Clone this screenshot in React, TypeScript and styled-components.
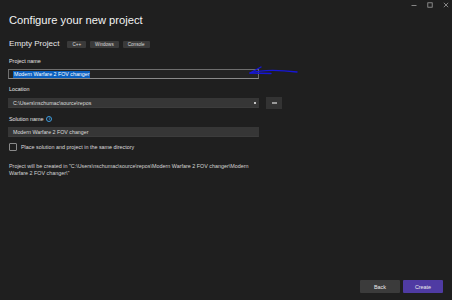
import React from "react";
import styled, { createGlobalStyle } from "styled-components";

const GlobalStyle = createGlobalStyle`
  html, body {
    margin: 0;
    padding: 0;
    background: #1f1f1f;
  }
  body {
    font-family: "Liberation Sans", Arial, sans-serif;
    color: #e6e6e6;
  }
`;

const Window = styled.div`
  position: relative;
  width: 452px;
  height: 300px;
  background: #1f1f1f;
  display: flex;
  flex-direction: column;
  box-sizing: border-box;
  padding: 12px 9px 7px 8px;
  overflow: hidden;
`;

const Controls = styled.div`
  position: absolute;
  top: 0;
  right: -2px;
  display: flex;
`;

const ControlButton = styled.div`
  width: 16px;
  height: 10px;
  display: flex;
  align-items: center;
  justify-content: center;
`;

const Title = styled.h1`
  margin: 0 0 0 1px;
  font-size: 11.2px;
  font-weight: 400;
  line-height: 16px;
  color: #f2f2f2;
`;

const TemplateRow = styled.div`
  display: flex;
  align-items: center;
  height: 10px;
  margin: 11px 0 0 1px;
  gap: 4px;
`;

const TemplateName = styled.span`
  font-size: 8.1px;
  line-height: 10px;
  color: #e8e8e8;
  margin-right: 4px;
`;

const Tag = styled.span`
  font-size: 4.6px;
  line-height: 7px;
  padding: 0 5px;
  background: #3a3a3a;
  color: #dadada;
  border-radius: 1px;
`;

const Field = styled.div<{ $top: number }>`
  display: flex;
  flex-direction: column;
  margin-top: ${({ $top }) => $top}px;
`;

const Label = styled.div`
  display: flex;
  align-items: center;
  gap: 3px;
  height: 8px;
  font-size: 5.4px;
  line-height: 8px;
  color: #e6e6e6;
  margin: 0 0 4px 1px;
`;

const Row = styled.div`
  display: flex;
  align-items: center;
  gap: 7px;
`;

const Input = styled.div<{ $focused?: boolean }>`
  width: 251px;
  height: 10px;
  box-sizing: border-box;
  display: flex;
  align-items: center;
  padding-left: 4px;
  font-size: 5.3px;
  color: #dcdcdc;
  background: ${({ $focused }) => ($focused ? "#232323" : "#363636")};
  border: 1px solid ${({ $focused }) => ($focused ? "#6e6e6e" : "#363636")};
  border-bottom-color: ${({ $focused }) => ($focused ? "#8a8a8a" : "#3c3c3c")};
  position: relative;
`;

const Selected = styled.span`
  background: #0a5fbf;
  color: #ffffff;
  padding: 0 1px;
  line-height: 7px;
`;

const Caret = styled.span`
  position: absolute;
  right: 2px;
  top: 3px;
  width: 2px;
  height: 2px;
  background: #c4c4c4;
`;

const SmallButton = styled.div`
  width: 16px;
  height: 12px;
  background: #333333;
  display: flex;
  align-items: center;
  justify-content: center;
`;

const Dots = styled.span`
  width: 5px;
  height: 1.5px;
  background: #9a9a9a;
`;

const InfoIcon = styled.span`
  width: 4px;
  height: 4px;
  border-radius: 50%;
  border: 1px solid #3d9de0;
  display: inline-flex;
  align-items: center;
  justify-content: center;
  font-size: 4px;
  line-height: 4px;
  color: #3d9de0;
  font-weight: 700;
`;

const CheckRow = styled.label`
  display: flex;
  align-items: center;
  gap: 4px;
  height: 8px;
  margin: 6px 0 0 1px;
  font-size: 5.4px;
  color: #dcdcdc;
`;

const CheckBox = styled.span`
  width: 6px;
  height: 6px;
  border: 1px solid #8a8a8a;
  border-radius: 1px;
`;

const Note = styled.p`
  margin: 12px 0 0 1px;
  width: 256px;
  font-size: 5.4px;
  line-height: 7px;
  color: #d4d4d4;
`;

const Spacer = styled.div`
  flex: 1;
`;

const Footer = styled.div`
  display: flex;
  justify-content: flex-end;
  gap: 3px;
`;

const FooterButton = styled.div<{ $primary?: boolean }>`
  width: 40px;
  height: 13px;
  display: flex;
  align-items: center;
  justify-content: center;
  font-size: 5.4px;
  color: #ececec;
  background: ${({ $primary }) => ($primary ? "#4f3ba3" : "#3b3b3b")};
  border-radius: 1px;
`;

const Arrow = styled.svg`
  position: absolute;
  left: 246px;
  top: 62px;
`;

export default function App() {
  return (
    <>
      <GlobalStyle />
      <Window>
        <Controls>
          <ControlButton>
            <svg width="6" height="6" viewBox="0 0 6 6">
              <line x1="0.5" y1="3.5" x2="5.5" y2="3.5" stroke="#a0a0a0" strokeWidth="0.8" />
            </svg>
          </ControlButton>
          <ControlButton>
            <svg width="6" height="6" viewBox="0 0 6 6">
              <rect x="0.8" y="0.8" width="4.4" height="4.4" fill="none" stroke="#a0a0a0" strokeWidth="0.8" />
            </svg>
          </ControlButton>
          <ControlButton>
            <svg width="6" height="6" viewBox="0 0 6 6">
              <path d="M0.8 0.8 L5.2 5.2 M5.2 0.8 L0.8 5.2" stroke="#a0a0a0" strokeWidth="0.8" />
            </svg>
          </ControlButton>
        </Controls>

        <Title>Configure your new project</Title>

        <TemplateRow>
          <TemplateName>Empty Project</TemplateName>
          <Tag>C++</Tag>
          <Tag>Windows</Tag>
          <Tag>Console</Tag>
        </TemplateRow>

        <Field $top={8}>
          <Label>Project name</Label>
          <Input $focused>
            <Selected>Modern Warfare 2 FOV changer</Selected>
          </Input>
        </Field>

        <Field $top={6}>
          <Label>Location</Label>
          <Row>
            <Input>
              C:\Users\nschumac\source\repos
              <Caret />
            </Input>
            <SmallButton>
              <Dots />
            </SmallButton>
          </Row>
        </Field>

        <Field $top={6}>
          <Label>
            Solution name <InfoIcon>i</InfoIcon>
          </Label>
          <Input>Modern Warfare 2 FOV changer</Input>
        </Field>

        <CheckRow>
          <CheckBox />
          Place solution and project in the same directory
        </CheckRow>

        <Note>
          Project will be created in "C:\Users\nschumac\source\repos\Modern Warfare 2 FOV changer\Modern
          Warfare 2 FOV changer\"
        </Note>

        <Spacer />

        <Footer>
          <FooterButton>Back</FooterButton>
          <FooterButton $primary>Create</FooterButton>
        </Footer>

        <Arrow width="60" height="20" viewBox="0 0 60 20">
          <path
            d="M4 11 C 18 7, 34 8, 51 10"
            fill="none"
            stroke="#1616d6"
            strokeWidth="1.4"
            strokeLinecap="round"
          />
          <path
            d="M15 5 L 4 11 L 25 11.5"
            fill="none"
            stroke="#1616d6"
            strokeWidth="1.4"
            strokeLinecap="round"
            strokeLinejoin="round"
          />
        </Arrow>
      </Window>
    </>
  );
}
